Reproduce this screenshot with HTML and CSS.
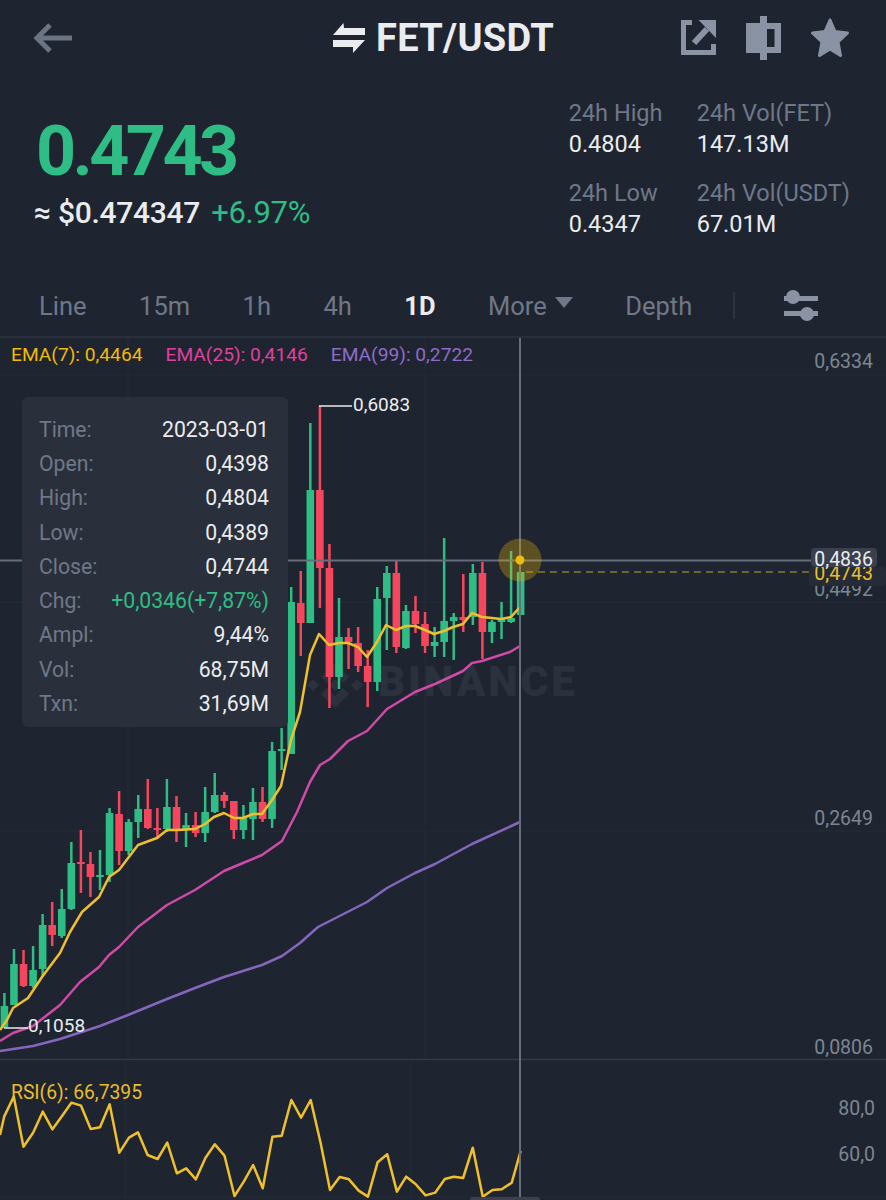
FILE: index.html
```html
<!DOCTYPE html>
<html lang="en">
<head>
    <meta charset="UTF-8">
    <meta name="viewport" content="width=device-width, initial-scale=1.0">
    <title>FET/USDT</title>
    <link rel="stylesheet" href="styles.css">
</head>
<body>
    <header class="topbar">
        <svg class="icon-back" width="40" height="32" viewBox="0 0 40 32"><path d="M17 3 4 16l13 13M5 16h34" fill="none" stroke="#6b7482" stroke-width="5"/></svg>
        <div class="pair">
            <svg width="34" height="32" viewBox="0 0 34 32"><path d="M1 13 11.500 1l.5 5h21v7zM33 18H1v7h20v6z" fill="#eaecef"/></svg>
            <span>FET/USDT</span>
        </div>
        <div class="top-icons">
            <svg width="35" height="36" viewBox="0 0 35 36"><path d="M0 0h11v5H5v25h25v-6h5v11H0zM17.500 0H35v18z" fill="#8a93a3"/><path d="M26 9 13 23" stroke="#8a93a3" stroke-width="6"/></svg>
            <svg width="35" height="44" viewBox="0 0 35 44"><path d="M14 0h7v7h14v30H21v7h-7v-7H0V7h14zM21 13v18h7.500V13z" fill="#8a93a3" fill-rule="evenodd"/></svg>
            <svg width="38" height="40" viewBox="0 0 38 40"><path d="M19 2l5 11.500L36.500 15 27 24l2.500 13.500L19 31 8.500 37.500 11 24 1.500 15 14 13.500z" fill="#8a93a3" stroke="#8a93a3" stroke-width="3" stroke-linejoin="round"/></svg>
        </div>
    </header>

    <section class="summary">
        <div>
            <div class="price">0.4743</div>
            <div class="approx">≈ $0.474347 <span class="change">+6.97%</span></div>
        </div>
        <div class="stats">
            <div><label>24h High</label><b>0.4804</b></div>
            <div><label>24h Vol(FET)</label><b>147.13M</b></div>
            <div><label>24h Low</label><b>0.4347</b></div>
            <div><label>24h Vol(USDT)</label><b>67.01M</b></div>
        </div>
    </section>

    <nav class="tabs">
        <span>Line</span>
        <span>15m</span>
        <span>1h</span>
        <span>4h</span>
        <span class="active">1D</span>
        <span class="more">More<i class="caret"></i></span>
        <span>Depth</span>
        <i class="divider"></i>
        <svg width="34" height="32" viewBox="0 0 34 32"><path d="M0 6h34v5H0zM0 21h34v5H0z" fill="#8a93a3"/><circle cx="9" cy="7" r="7" fill="#8a93a3"/><circle cx="23" cy="24" r="7" fill="#8a93a3"/></svg>
    </nav>

    <main class="chart">
        <div class="watermark">BINANCE</div>
        <svg id="plot" class="plot" width="886" height="862" viewBox="0 338 886 862"></svg>

        <div class="legend">
            <span class="ema7">EMA(7): 0,4464</span>
            <span class="ema25">EMA(25): 0,4146</span>
            <span class="ema99">EMA(99): 0,2722</span>
        </div>

        <div class="tooltip">
            <div><span>Time:</span><b>2023-03-01</b></div>
            <div><span>Open:</span><b>0,4398</b></div>
            <div><span>High:</span><b>0,4804</b></div>
            <div><span>Low:</span><b>0,4389</b></div>
            <div><span>Close:</span><b>0,4744</b></div>
            <div><span>Chg:</span><b class="up">+0,0346(+7,87%)</b></div>
            <div><span>Ampl:</span><b>9,44%</b></div>
            <div><span>Vol:</span><b>68,75M</b></div>
            <div><span>Txn:</span><b>31,69M</b></div>
        </div>

        <span class="note note-high">0,6083</span>
        <span class="note note-low">0,1058</span>

        <span class="axis axis-1">0,6334</span>
        <span class="axis axis-2">0,4492</span>
        <span class="axis axis-3">0,2649</span>
        <span class="axis axis-4">0,0806</span>
        <span class="axis axis-5">80,0</span>
        <span class="axis axis-6">60,0</span>

        <span class="tag tag-last">0,4743</span>
        <span class="tag tag-cross">0,4836</span>

        <div class="rsi-label">RSI(6): 66,7395</div>
        <i class="rsi-tag"></i>
    </main>

    <script src="chart.js"></script>
</body>
</html>
```

FILE: styles.css
```css
* { box-sizing: border-box; }
html, body { margin: 0; padding: 0; }
body { width: 886px; height: 1200px; overflow: hidden; background: #1f2530; color: #eaecef; font-family: Roboto, "Noto Sans", sans-serif; }

.topbar { height: 76px; padding: 0 37px 0 33px; display: flex; align-items: center; position: relative; }
.pair { display: flex; align-items: center; gap: 10px; margin-left: 259px; font-size: 38px; font-weight: 700; letter-spacing: 0.3px; }
.top-icons { margin-left: auto; display: flex; align-items: center; gap: 30px; }

.summary { height: 199px; padding: 20px 36px 0 37px; display: flex; justify-content: space-between; }
.price { margin-top: 14px; margin-left: -1px; font-size: 70px; line-height: 82px; font-weight: 700; letter-spacing: -3.6px; color: #2ebd85; }
.approx { margin-top: 3px; margin-left: -3px; font-size: 30px; line-height: 36px; font-weight: 500; letter-spacing: -0.3px; color: #eaecef; }
.change { margin-left: 4px; font-size: 31px; color: #2ebd85; font-weight: 400; }
.stats { margin-top: 2px; display: grid; grid-template-columns: 128px auto; row-gap: 18px; align-content: start; }
.stats label { display: block; font-size: 23.5px; line-height: 31px; color: #6f7888; }
.stats b { display: block; font-size: 23.5px; line-height: 31px; font-weight: 400; color: #eaecef; }

.tabs { height: 63px; padding: 0 67px 0 39px; display: flex; align-items: center; gap: 52.5px; font-size: 25.5px; color: #6f7888; border-bottom: 2px solid #2a303b; }
.tabs .active { color: #eaecef; font-weight: 700; }
.more { display: flex; align-items: center; gap: 8px; }
.caret { width: 0; height: 0; margin-top: -6px; border-left: 9px solid transparent; border-right: 9px solid transparent; border-top: 11px solid #6f7888; }
.divider { width: 2px; height: 27px; margin: 0 -3px 0 -12px; background: #2f3540; }

.chart { position: relative; height: 862px; overflow: hidden; }
.plot { position: absolute; left: 0; top: 0; }
.watermark { position: absolute; left: 378px; top: 317px; font-size: 42px; line-height: 54px; font-weight: 900; letter-spacing: 3px; color: #2b313d; }

.legend { position: absolute; left: 11px; top: 5px; display: flex; gap: 23px; font-size: 19.2px; line-height: 24px; }
.ema7 { color: #f0b90b; }
.ema25 { color: #e0409f; }
.ema99 { color: #8e6cc8; }

.tooltip { position: absolute; left: 22px; top: 59px; width: 266px; height: 330px; padding: 15px 19px 0 17px; background: #2a303b; border-radius: 6px; font-size: 21.2px; }
.tooltip div { height: 34.3px; display: flex; align-items: center; justify-content: space-between; }
.tooltip span { color: #6f7888; }
.tooltip b { font-weight: 400; color: #eaecef; }
.tooltip .up { color: #2ebd85; }

.note { position: absolute; font-size: 19px; line-height: 22px; color: #eaecef; }
.note-high { left: 353px; top: 56px; }
.note-low { left: 28px; top: 677px; }

.axis { position: absolute; right: 13px; font-size: 19.5px; line-height: 22px; color: #7d8592; }
.axis-1 { top: 13px; }
.axis-2 { top: 241px; }
.axis-3 { top: 470px; }
.axis-4 { top: 699px; }
.axis-5 { top: 760px; right: 11px; }
.axis-6 { top: 806px; right: 11px; }

.tag { position: absolute; font-size: 19.5px; border-radius: 4px; }
.tag-cross { right: 9px; top: 210px; height: 19px; padding: 0 4px 0 3px; line-height: 23px; color: #eaecef; background: #3a404d; }
.tag-last { right: 0; top: 229px; height: 19px; padding: 0 13px 0 5px; line-height: 13px; color: #e9bd2c; background: #262c37; }

.rsi-label { position: absolute; left: 11px; top: 744px; font-size: 19.3px; line-height: 22px; color: #e9bd2c; }
.rsi-tag { position: absolute; left: 470px; bottom: 0; width: 70px; height: 3px; border-radius: 3px 3px 0 0; background: #3a404d; }
```

FILE: chart.js
```js
// candles: [green?, wick top, body top, body bottom, wick bottom], y in page pixels
const candles = [
    [1,993,1006,1027,1028],[1,949,964,1005,1005],[0,950,964,986,987],[1,946,970,986,988],
    [1,914,925,969,977],[0,902,925,935,946],[1,889,909,936,938],[1,842,863,909,910],
    [0,830,862,864,893],[0,852,864,877,897],[1,850,875,877,890],[1,808,813,875,882],
    [0,791,814,851,865],[1,819,822,851,855],[1,795,809,822,838],[0,779,809,828,829],
    [0,808,828,830,839],[1,779,807,829,832],[0,796,807,829,842],[1,813,825,829,847],
    [0,812,825,833,837],[1,787,812,833,842],[1,773,795,812,813],[0,792,795,801,808],
    [0,801,801,830,839],[1,805,818,830,839],[1,788,802,819,840],[0,787,802,819,822],
    [1,742,751,819,828],[1,728,749,750,770],[1,587,602,754,754],[0,571,603,623,656],
    [1,423,490,623,623],[0,406,490,568,608],[0,544,568,677,708],[1,598,637,677,689],
    [0,628,637,642,669],[0,627,643,666,672],[0,650,666,682,707],[1,587,599,682,691],
    [1,566,573,598,650],[0,561,573,647,653],[1,605,611,648,649],[0,596,611,624,633],
    [0,612,624,646,653],[1,627,642,646,657],[1,538,621,642,657],[1,613,617,621,660],
    [0,574,617,620,632],[1,564,573,617,625],[0,562,573,632,659],[1,620,622,632,643],
    [1,602,619,622,639],[1,551,618,622,623],[1,572,572,615,615]
];

const ema7 = [[0,1030],[7,1020],[13,1008],[28,998],[42,977],[60,953],[70,932],[82,912],[99,897],[109,877],[119,870],[138,845],[157,838],[167,830],[177,830],[195,829],[205,824],[214,817],[224,813],[234,818],[243,818],[253,814],[262,814],[272,800],[281,786],[291,740],[300,712],[310,655],[319,634],[329,645],[339,643],[348,643],[358,647],[367,657],[377,642],[386,625],[396,630],[406,626],[415,626],[425,630],[434,634],[444,631],[453,627],[463,624],[472,613],[482,617],[492,618],[501,619],[511,617],[520,607]];
const ema25 = [[0,1041],[13,1033],[33,1026],[60,1005],[80,982],[99,967],[109,955],[119,947],[138,927],[167,905],[195,890],[224,871],[243,863],[262,855],[282,841],[297,812],[310,782],[320,765],[330,759],[348,741],[367,731],[387,709],[415,692],[435,684],[463,671],[472,663],[482,661],[510,652],[520,646]];
const ema99 = [[0,1051],[33,1046],[60,1039],[100,1026],[128,1015],[167,999],[195,988],[224,977],[262,965],[282,956],[300,943],[318,927],[367,902],[387,888],[415,873],[435,864],[472,844],[520,822]];
const rsiRaw = [[0,255],[12,200],[40,140],[68,290],[96,248],[124,185],[152,238],[180,198],[207,158],[235,167],[263,237],[290,232],[318,163],[346,308],[374,263],[400,247],[428,315],[457,327],[485,278],[513,370],[540,355],[568,388],[596,323],[623,283],[651,317],[680,438],[707,395],[734,345],[762,415],[790,260],[817,257],[845,150],[873,203],[901,150],[930,280],[957,420],[985,381],[1012,388],[1040,422],[1067,440],[1095,337],[1123,313],[1151,425],[1178,380],[1205,402],[1234,436],[1262,428],[1290,387],[1316,380],[1343,384],[1371,293],[1400,440],[1428,420],[1455,418],[1484,398],[1510,303]];
const rsi = rsiRaw.map(([x, y]) => [x / 2.9, 1050 + y / 3]);

const GREEN = '#2ebd85', RED = '#f6465d';
const line = (d, color, w = 2.5) => `<path d="${d}" fill="none" stroke="${color}" stroke-width="${w}" stroke-linejoin="round"/>`;
const poly = pts => 'M' + pts.map(p => p.join(' ')).join('L');

let out = '';

// grid
for (const x of [128, 425]) out += line(`M${x} 338V1059`, '#262c37', 1);
for (const x of [125, 411]) out += line(`M${x} 1060V1200`, '#262c37', 1);
for (const y of [375, 602, 831]) out += line(`M0 ${y}H886`, '#262c37', 1);
out += line('M0 1059.500H886', '#343a46', 1.500);
out += line('M0 1197H886', '#262c37', 1);

// watermark logo
out += '<path d="M335 663l14 14-6 6-8-8-8 8-6-6zM313 679l6 6-6 6-6-6zM357 679l6 6-6 6-6-6zM335 679l6 6-6 6-6-6zM335 708l-14-14 6-6 8 8 8-8 6 6z" fill="#2b313d"/>';

// candles
candles.forEach(([up, top, bodyTop, bodyBottom, bottom], i) => {
    const x = 4.4 + 9.56 * i;
    const color = up ? GREEN : RED;
    out += line(`M${x} ${top}V${bottom}`, color, 2.5);
    out += `<rect x="${x - 3.8}" y="${bodyTop}" width="7.6" height="${Math.max(bodyBottom - bodyTop, 2)}" fill="${color}"/>`;
});

// moving averages
out += line(poly(ema99), '#8467bd');
out += line(poly(ema25), '#d04aa8');
out += line(poly(ema7), '#efc02e');
out += line(poly(rsi), '#efc02e');

// high / low markers
out += line('M319 406H352', '#eaecef', 1.500);
out += line('M4 1028H28', '#eaecef', 1.500);

// crosshair
out += line('M520 338V1200', '#666e7c', 2);
out += line('M288 560.500H812', '#666e7c', 2);
out += line('M0 560.500H22', '#666e7c', 2);
out += line('M526 572H812', '#6b6433', 2).replace('<path', '<path stroke-dasharray="7 5"');
out += '<circle cx="520" cy="560" r="21.500" fill="#f0b90b" fill-opacity=".3"/><circle cx="520" cy="560" r="4.500" fill="#f0b90b"/>';

document.getElementById('plot').innerHTML = out;
```
